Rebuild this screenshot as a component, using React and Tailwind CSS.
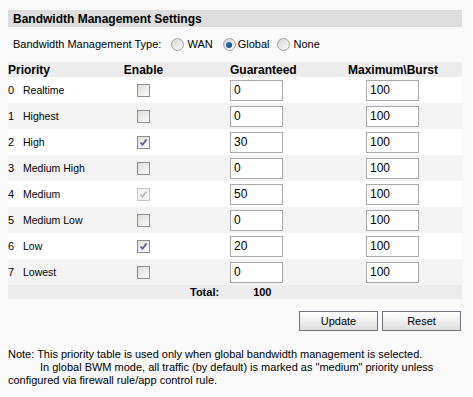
import React from 'react';

const rows = [
  { n: 0, label: 'Realtime', on: false, g: '0', m: '100' },
  { n: 1, label: 'Highest', on: false, g: '0', m: '100' },
  { n: 2, label: 'High', on: true, g: '30', m: '100' },
  { n: 3, label: 'Medium High', on: false, g: '0', m: '100' },
  { n: 4, label: 'Medium', on: true, disabled: true, g: '50', m: '100' },
  { n: 5, label: 'Medium Low', on: false, g: '0', m: '100' },
  { n: 6, label: 'Low', on: true, g: '20', m: '100' },
  { n: 7, label: 'Lowest', on: false, g: '0', m: '100' },
];

function Check({ on, disabled }) {
  return (
    <span
      className={`flex h-[13px] w-[13px] items-center justify-center border ${
        disabled ? 'border-[#c4c4c4] bg-[#f4f4f4]' : 'border-[#8e8f8f] bg-gradient-to-br from-[#dcdcd7] to-[#fbfbfb]'
      }`}
    >
      {on && (
        <svg width="9" height="9" viewBox="0 0 9 9">
          <path
            d="M1.5 4.5 L3.5 6.8 L7.5 1.5"
            fill="none"
            stroke={disabled ? '#b8b8b8' : '#4a5593'}
            strokeWidth="1.6"
          />
        </svg>
      )}
    </span>
  );
}

function Radio({ on }) {
  return (
    <span className="flex h-[13px] w-[13px] items-center justify-center rounded-full border border-[#a2a2a2] bg-gradient-to-br from-[#d6d6d3] to-[#fcfcfc]">
      {on && <span className="h-[6px] w-[6px] rounded-full bg-gradient-to-br from-[#3a80c8] to-[#0c3f8a]" />}
    </span>
  );
}

function Field({ value }) {
  return (
    <div className="flex h-[21px] w-[53px] items-center border border-[#a9a9a9] bg-white pl-[3px] text-[12px] text-black">
      {value}
    </div>
  );
}

export default function App() {
  return (
    <div className="min-h-[397px] w-[473px] bg-[#f9f9f9] pt-[10px] text-black" style={{ fontFamily: '"Liberation Sans", Arial, sans-serif' }}>
      <div className="ml-[8px] w-[454px]">
        <div className="flex h-[17px] items-center bg-[#dddddd] pl-[5px] text-[12px] font-bold">
          Bandwidth Management Settings
        </div>

        <div className="flex h-[35px] items-center pl-[5px] text-[11px]">
          <span>Bandwidth Management Type:</span>
          <span className="ml-[10px] flex items-center gap-[3px]"><Radio /> WAN</span>
          <span className="ml-[10px] flex items-center gap-[2px]"><Radio on /> Global</span>
          <span className="ml-[8px] flex items-center gap-[3px]"><Radio /> None</span>
        </div>

        <div className="grid h-[15px] grid-cols-[112px_47px_181px_114px] items-center bg-[#ececec] text-[12px] font-bold leading-none">
          <span>Priority</span>
          <span className="text-center">Enable</span>
          <span className="pl-[63px]">Guaranteed</span>
          <span>Maximum\Burst</span>
        </div>

        {rows.map((r) => (
          <div
            key={r.n}
            className={`grid h-[26px] grid-cols-[112px_47px_181px_114px] items-center ${
              r.n % 2 ? 'bg-[#f4f4f4]' : 'bg-white'
            }`}
          >
            <span className="flex items-baseline">
              <span className="w-[15px] text-[11px]">{r.n}</span>
              <span className="text-[10.5px]">{r.label}</span>
            </span>
            <span className="flex justify-center">
              <Check on={r.on} disabled={r.disabled} />
            </span>
            <span className="pl-[63px]">
              <Field value={r.g} />
            </span>
            <span className="pl-[18px]">
              <Field value={r.m} />
            </span>
          </div>
        ))}

        <div className="flex h-[14px] items-center bg-[#ececec] text-[11px] font-bold">
          <span className="ml-[182px]">Total:</span>
          <span className="ml-[34px]">100</span>
        </div>

        <div className="mt-[12px] flex justify-end gap-[4px] pr-[1px]">
          <button className="h-[20px] w-[79px] border border-[#707078] bg-gradient-to-b from-white to-[#dedede] text-[11px]">
            Update
          </button>
          <button className="h-[20px] w-[79px] border border-[#707078] bg-gradient-to-b from-white to-[#dedede] text-[11px]">
            Reset
          </button>
        </div>

        <div className="mt-[17px] text-[11px] leading-[13px]">
          <div>Note: This priority table is used only when global bandwidth management is selected.</div>
          <div className="pl-[32px]">In global BWM mode, all traffic (by default) is marked as "medium" priority unless</div>
          <div>configured via firewall rule/app control rule.</div>
        </div>
      </div>
    </div>
  );
}
